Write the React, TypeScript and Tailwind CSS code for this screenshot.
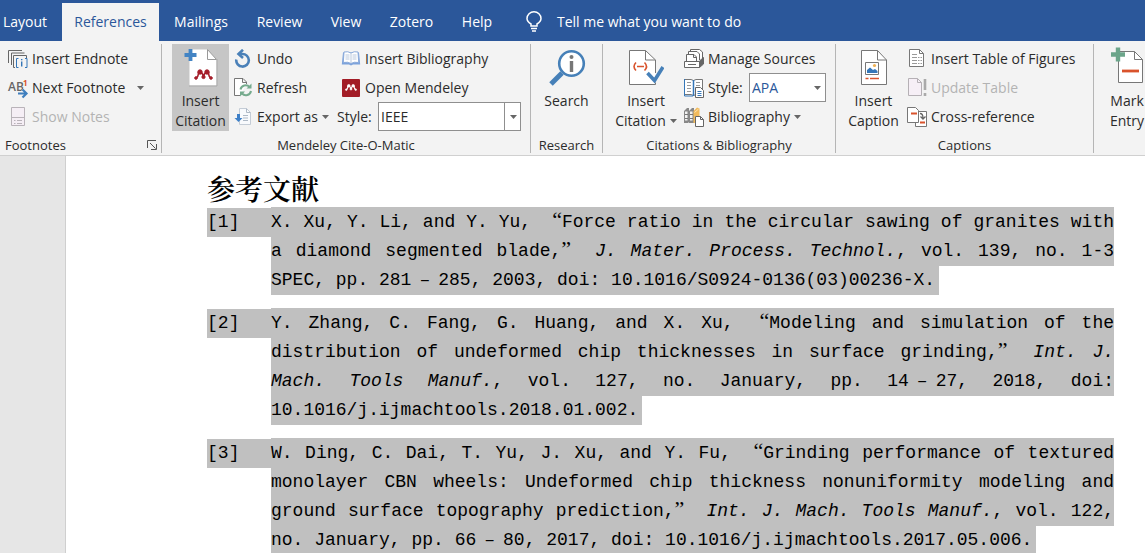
import React from "react";

type RowProps = {
  icon: React.ReactNode;
  label: string;
  disabled?: boolean;
  arrow?: boolean;
  arrowClass?: string;
};

const Caret: React.FC<{ className?: string }> = ({ className = "" }) => (
  <svg width="7" height="4" viewBox="0 0 7 4" className={className}>
    <path d="M0 0h7L3.5 4z" fill="#666" />
  </svg>
);

const Row: React.FC<RowProps> = ({
  icon,
  label,
  disabled,
  arrow,
  arrowClass = "ml-1",
}) => (
  <button
    disabled={disabled}
    className="flex h-[29px] items-center gap-1 whitespace-nowrap text-left disabled:text-[#b3b3b3]"
  >
    <span className="flex w-5 justify-center">{icon}</span>
    <span>{label}</span>
    {arrow && <Caret className={arrowClass} />}
  </button>
);

const Group: React.FC<{
  title: string;
  className: string;
  launcher?: boolean;
  children: React.ReactNode;
}> = ({ title, className, launcher, children }) => (
  <section
    className={`flex shrink-0 flex-col border-r border-[#b5b5b5] ${className}`}
  >
    <div className="flex h-[93px]">{children}</div>
    <div className="flex h-4 items-center justify-center text-[13px] leading-4">
      {title}
      {launcher && (
        <button aria-label={`${title} options`} className="ml-auto mr-1">
          <svg width="10" height="10" viewBox="0 0 10 10" fill="none" stroke="#555">
            <path d="M.5 8V.5H9M3 3l5.500 5.500M9.500 4v5.500H4" />
          </svg>
        </button>
      )}
    </div>
  </section>
);

/* Icons */

const EndnoteIcon = () => (
  <svg width="20" height="20" viewBox="0 0 20 20" fill="none" stroke="#666">
    <path d="M.5 14V1.500H14M3.500 16V4H16.500M7 18.500H5.500V6.500H18.500V9" />
    <path d="M10.500 9.500h-2v9h2M17 9.500h2v9h-2" stroke="#3476b8" />
    <path d="M13.700 12.500v5M13.700 10v1.300" stroke="#3476b8" strokeWidth="1.400" />
  </svg>
);

const NextFootnoteIcon = () => (
  <svg width="20" height="20" viewBox="0 0 20 20" className="overflow-visible">
    <text x="0" y="13" fontSize="12" fontWeight="600" fill="#666">AB</text>
    <text x="15" y="8" fontSize="8" fontWeight="700" fill="#d9532c">1</text>
    <path d="M10 15.500h8M14.500 11.500l4 4-4 4" stroke="#f3f3f3" strokeWidth="4" fill="none" />
    <path d="M10 15.500h8M14.500 11.500l4 4-4 4" stroke="#3f7fbe" strokeWidth="2.200" fill="none" />
  </svg>
);

const ShowNotesIcon = () => (
  <svg width="16" height="19" viewBox="0 0 16 19" fill="#f5eef5" stroke="#b9b3b9">
    <path d="M1.500.5h13v18h-13zM1.500 10.500h13" />
    <path d="M4 13.500h1.500M7 13.500h5M4 16.500h1.500M7 16.500h5" />
  </svg>
);

const MendeleyMark = ({ fill }: { fill: string }) => (
  <g fill={fill} stroke={fill}>
    <circle cx="6" cy="3" r="2.200" />
    <circle cx="13" cy="3" r="2.200" />
    <circle cx="2" cy="9" r="1.300" />
    <circle cx="9.500" cy="8" r="1.600" />
    <circle cx="17" cy="9" r="1.300" />
    <path d="M2 9q2.500-1 2.500-6M6 3q3 1 3.500 5 .5-4 3.500-5M14.500 3q0 5 2.500 6" fill="none" strokeWidth="1.600" />
  </g>
);

const MendeleyCitationIcon = () => (
  <svg width="36" height="40" viewBox="0 0 36 40">
    <path d="M6.500 1.500h18l9 10v26h-27z" fill="#fff" />
    <path d="M24.500 1.500v10h9z" fill="#fff" stroke="#999" />
    <path d="M6 38h28V11" fill="none" stroke="#aaa" />
    <path d="M7.500 1v12M1.500 7h12" stroke="#4384c4" strokeWidth="3.800" />
    <g transform="translate(11 21)">
      <MendeleyMark fill="#a51e2a" />
    </g>
  </svg>
);

const UndoIcon = () => (
  <svg width="18" height="19" viewBox="0 0 18 19" fill="none" stroke="#4a80b8" strokeWidth="2.600">
    <path d="M2.300 10.500A6.300 6.300 0 1 0 8 5H5" />
    <path d="M9 .8L4.500 5 9 9" />
  </svg>
);

const RefreshIcon = () => (
  <svg width="20" height="19" viewBox="0 0 20 19" fill="none">
    <path d="M7 17.500H1.500V.5H10l3.500 3.500v2M9.500.5v4h4" fill="#fff" stroke="#777" />
    <path d="M7.500 11.500a5.200 5.200 0 0 1 9-2.500M18 13a5.200 5.200 0 0 1-9 2.500" stroke="#75aa8d" strokeWidth="2" />
    <path d="M18.500 5.500v5h-5zM7 18.500v-5h5z" fill="#75aa8d" />
  </svg>
);

const ExportIcon = () => (
  <svg width="18" height="18" viewBox="0 0 18 18">
    <path d="M5.500.5h7l4 4v12h-11z" fill="#f8fafd" stroke="#c4ccd6" />
    <path d="M12.500.5v4h4M9 7.500h5M9 10h5M9 12.500h5" fill="none" stroke="#aeb9c6" />
    <path d="M3 6h3v4h2.500l-4 4-4-4H3z" fill="#3d7fc7" />
  </svg>
);

const BookIcon = () => (
  <svg width="20" height="15" viewBox="0 0 20 15">
    <path d="M2 1.500L.8 13.500H8l2 1 2-1h7.200L18 1.500z" fill="#7da3dc" />
    <path d="M3 1q4-1 7 1 3-2 7-1l.7 10.500Q13 10.500 10 12.500 7 10.500 2.300 11.500z" fill="#fff" stroke="#8aaada" />
    <path d="M10 2v10M4.500 4h4M4.500 6h4M4.500 8h4M11.500 4h4M11.500 6h4M11.500 8h4" stroke="#b9c8dd" />
  </svg>
);

const MendeleyIcon = () => (
  <svg width="18" height="18" viewBox="0 0 18 18">
    <rect width="18" height="18" rx="1" fill="#a21c26" />
    <g transform="translate(3 5) scale(.63)">
      <MendeleyMark fill="#fff" />
    </g>
  </svg>
);

const SearchIcon = () => (
  <svg width="38" height="38" viewBox="0 0 38 38">
    <path d="M14 24L3 35" stroke="#4680b8" strokeWidth="5" />
    <circle cx="23.500" cy="14.500" r="12.300" fill="#fff" stroke="#4680b8" strokeWidth="2.600" />
    <circle cx="23.500" cy="8" r="2" fill="#777" />
    <path d="M23.500 12v11" stroke="#777" strokeWidth="3.400" />
  </svg>
);

const CitationIcon = () => (
  <svg width="36" height="38" viewBox="0 0 36 38" fill="none">
    <path d="M27.500 24V11l-10-9.500h-16v34h26v-2" fill="#fff" stroke="#777" />
    <path d="M17.500 1.500v9.500h10" stroke="#777" />
    <path d="M8 13.500q-4 4 0 8M16.500 13.500q4 4 0 8M9 17.500h7" stroke="#d9532c" strokeWidth="1.600" />
    <path d="M19.500 24l7 7.500L35 18" stroke="#4680b8" strokeWidth="3.600" />
  </svg>
);

const ManageSourcesIcon = () => (
  <svg width="20" height="20" viewBox="0 0 20 20" fill="#fff" stroke="#666">
    <path d="M6.500 9V.5h9L18.500 3v7" />
    <path d="M4.500 11V2.500H13L15.500 5v6" />
    <path d="M2.500 13V5.500H10l2.500 2.500v5" />
    <path d="M9.500 5.500v3h3" fill="none" />
    <path d="M15.500 12l4-3.500V15l-4 3.500z" fill="#666" />
    <path d="M.5 12.500h15v6H.5z" />
    <path d="M4 15.500h8" />
  </svg>
);

const StyleIcon = () => (
  <svg width="20" height="20" viewBox="0 0 20 20" fill="none">
    <path d="M.5 1.500H7l2.500 1 2.500-1h6.500v15H12l-2.500 1-2.500-1H.5z" fill="#fff" stroke="#777" />
    <path d="M9.500 2v16" stroke="#3476b8" strokeWidth="1.500" />
    <path d="M.5 1v17H9" stroke="#3476b8" />
    <path d="M3 4.500h4M3 7.500h4M3 10.500h4M3 13.500h4M12 4.500h4M12 7.500h4" stroke="#999" />
    <path d="M11.500 9.500h5l3 3v7h-8z" fill="#fff" stroke="#666" />
    <path d="M13.500 13.500h4M13.500 15.500h4M13.500 17.500h4" stroke="#3476b8" />
  </svg>
);

const BibliographyIcon = () => (
  <svg width="20" height="20" viewBox="0 0 20 20">
    <path d="M0 4l3-3h2v14l-1 1H0zM5 4l3-3h2v15H5z" fill="#888" />
    <path d="M1 4.500h2.500v9H1zM6 4.500h2.500v9H6z" fill="#f3f3f3" />
    <path d="M1 7.500h3M1 11.500h3M6 7.500h3M6 11.500h3" stroke="#777" />
    <path d="M9.500 4L13 .5l2.500 1V9H11v7H9.500z" fill="#f2bb5c" />
    <path d="M10.500 5.500l4-3.500" stroke="#fbe4b8" />
    <path d="M11.500 9.500h5l3 3v7h-8z" fill="#fff" stroke="#666" />
    <path d="M16.500 9.500v3h3" fill="none" stroke="#666" />
  </svg>
);

const CaptionIcon = () => (
  <svg width="28" height="38" viewBox="0 0 28 38" fill="none">
    <path d="M1.500 1.500h16l9 9.500v24.500h-25z" fill="#fff" stroke="#777" />
    <path d="M17.500 1.500v9.500h9" stroke="#777" />
    <path d="M5.500 13.500h13v12h-13z" stroke="#777" />
    <path d="M7 24v-3l3-2.500 3 2.500 2-1 2.500 2v2z" fill="#3476b8" />
    <circle cx="14.500" cy="16.500" r="1.600" fill="#efb052" />
    <path d="M5.500 29.500h3M10 29.500h9" stroke="#d9532c" strokeWidth="1.300" />
  </svg>
);

const TableFiguresIcon = () => (
  <svg width="16" height="19" viewBox="0 0 16 19" fill="none">
    <path d="M.5.5h10l4 4v13H.5z" fill="#fff" stroke="#777" />
    <path d="M10.500.5v4h4" stroke="#777" />
    <path d="M3 5.500h5M3 8.500h5M9 8.500h1.500M3 11.500h5M9 11.500h1.500M3 14.500h5M9 14.500h1.500M11.500 8.500H13M11.500 11.500H13M11.500 14.500H13" stroke="#999" />
  </svg>
);

const UpdateTableIcon = () => (
  <svg width="19" height="19" viewBox="0 0 19 19" fill="none">
    <path d="M.5.5h9l4 4v13H.5z" fill="#f6eff6" stroke="#b5b0b5" />
    <path d="M9.500.5v4h4" stroke="#b5b0b5" />
    <path d="M17 1v11M17 15v3" stroke="#aaa" strokeWidth="2.600" />
  </svg>
);

const CrossRefIcon = () => (
  <svg width="20" height="20" viewBox="0 0 20 20" fill="none">
    <path d="M10.500 4.500h9v15h-11V15" fill="#fff" stroke="#777" />
    <path d="M.5.500h8l3 3v12H.5z" fill="#fff" stroke="#777" />
    <path d="M4 6.500h6M13 15.500h5" stroke="#d9532c" strokeWidth="2" />
    <path d="M13 6.500q3 0 3 4.500M13.500 9.500L16 12l2.500-2.500" stroke="#666" strokeWidth="1.300" />
  </svg>
);

const MarkEntryIcon = () => (
  <svg width="34" height="38" viewBox="0 0 34 38" fill="none">
    <path d="M8.500 4.500h16l8 8v23h-24z" fill="#fff" stroke="#777" />
    <path d="M24.500 4.500v8h8" stroke="#777" />
    <path d="M8 .5v14M1 7.500h14" stroke="#6ba58a" strokeWidth="4.400" />
    <path d="M12 24h17" stroke="#d9532c" strokeWidth="2.800" />
  </svg>
);

const BulbIcon = () => (
  <svg width="16" height="21" viewBox="0 0 16 21" fill="none" stroke="#fff" strokeWidth="1.500">
    <path d="M5 15v-2Q1 10.500 1 7.500a7 6.700 0 0 1 14 0q0 3-4 5.500v2zM5 17.500h6M6 20h4" />
  </svg>
);

const tabs = [
  { name: "Layout", className: "w-[62px] pr-3" },
  { name: "References", className: "w-[97px] bg-[#f3f3f3] text-[#2b579a]" },
  { name: "Mailings", className: "w-[84px]" },
  { name: "Review", className: "w-[73px]" },
  { name: "View", className: "w-[60px]" },
  { name: "Zotero", className: "w-[71px]" },
  { name: "Help", className: "w-[60px]" },
];

/* Full-width punctuation used between Latin text */
const OpenQuote = () => (
  <span className="pl-[10px] font-['Liberation_Serif',serif] text-[22px] leading-none">
    “
  </span>
);

const CloseQuote = () => (
  <span className="pr-[10px] font-['Liberation_Serif',serif] text-[22px] leading-none">
    ”
  </span>
);

const Dash = () => <span className="px-2">–</span>;

const references = [
  {
    id: 1,
    body: (
      <>
        X. Xu, Y. Li, and Y. Yu, <OpenQuote />
        Force ratio in the circular sawing of granites with a diamond segmented
        blade,
        <CloseQuote /> <em>J. Mater. Process. Technol.</em>, vol. 139, no. 1-3
        SPEC, pp. 281
        <Dash />
        285, 2003, doi:{" "}
        <span className="whitespace-nowrap">10.1016/S0924-0136(03)00236-X.</span>
      </>
    ),
  },
  {
    id: 2,
    body: (
      <>
        Y. Zhang, C. Fang, G. Huang, and X. Xu, <OpenQuote />
        Modeling and simulation of the distribution of undeformed chip
        thicknesses in surface grinding,
        <CloseQuote /> <em>Int. J. Mach. Tools Manuf.</em>, vol. 127, no.
        January, pp. 14
        <Dash />
        27, 2018, doi:{" "}
        <span className="whitespace-nowrap">
          10.1016/j.ijmachtools.2018.01.002.
        </span>
      </>
    ),
  },
  {
    id: 3,
    body: (
      <>
        W. Ding, C. Dai, T. Yu, J. Xu, and Y. Fu, <OpenQuote />
        Grinding performance of textured monolayer CBN wheels: Undeformed chip
        thickness nonuniformity modeling and ground surface topography
        prediction,
        <CloseQuote /> <em>Int. J. Mach. Tools Manuf.</em>, vol. 122, no.
        January, pp. 66
        <Dash />
        80, 2017, doi:{" "}
        <span className="whitespace-nowrap">
          10.1016/j.ijmachtools.2017.05.006.
        </span>
      </>
    ),
  },
];

const App: React.FC = () => {
  return (
    <div className="flex h-screen flex-col overflow-hidden bg-white font-['Open_Sans','Noto_Sans',sans-serif] text-[14px] text-[#2b2b2b]">
      {/* Tab bar */}
      <nav className="flex h-[41px] shrink-0 items-end bg-[#2b579a] text-white">
        {tabs.map((tab) => (
          <button
            key={tab.name}
            className={`h-[38px] shrink-0 whitespace-nowrap pb-[2px] text-center ${tab.className}`}
          >
            {tab.name}
          </button>
        ))}
        <button className="ml-[19px] flex h-[38px] items-center gap-[15px] whitespace-nowrap pb-[2px]">
          <BulbIcon />
          Tell me what you want to do
        </button>
      </nav>

      {/* Ribbon */}
      <div className="flex h-[115px] shrink-0 overflow-hidden border-b border-[#d0d0d0] bg-[#f3f3f3] pb-[2px] pt-[3px] leading-5">
        <Group title="Footnotes" launcher className="w-[162px] pl-[5px]">
          <div className="pl-[3px]">
            <Row icon={<EndnoteIcon />} label="Insert Endnote" />
            <Row icon={<NextFootnoteIcon />} label="Next Footnote" arrow arrowClass="ml-2" />
            <Row icon={<ShowNotesIcon />} label="Show Notes" disabled />
          </div>
        </Group>

        <Group title="Mendeley Cite-O-Matic" className="w-[369px]">
          <button className="ml-[10px] flex h-[87px] w-[57px] shrink-0 flex-col items-center bg-[#c6c6c6] pt-1">
            <MendeleyCitationIcon />
            <span className="mt-[3px]">Insert Citation</span>
          </button>
          <div className="ml-1 w-[104px] shrink-0">
            <Row icon={<UndoIcon />} label="Undo" />
            <Row icon={<RefreshIcon />} label="Refresh" />
            <Row icon={<ExportIcon />} label="Export as" arrow arrowClass="" />
          </div>
          <div className="shrink-0">
            <div className="pl-1">
              <Row icon={<BookIcon />} label="Insert Bibliography" />
              <Row icon={<MendeleyIcon />} label="Open Mendeley" />
            </div>
            <div className="flex items-center">
              <label htmlFor="mendeley-style" className="w-[41px]">
                Style:
              </label>
              <div className="relative">
                <select
                  id="mendeley-style"
                  className="h-[29px] w-[143px] appearance-none border border-[#8f8f8f] bg-white pl-[2px]"
                >
                  <option>IEEE</option>
                </select>
                <span className="pointer-events-none absolute inset-y-0 right-0 flex w-[17px] items-center justify-center border-l border-[#8f8f8f]">
                  <Caret />
                </span>
              </div>
            </div>
          </div>
        </Group>

        <Group title="Research" className="w-[72px]">
          <button className="flex w-full flex-col items-center self-start pt-[5px]">
            <SearchIcon />
            <span className="mt-1">Search</span>
          </button>
        </Group>

        <Group title="Citations & Bibliography" className="w-[233px]">
          <button className="flex w-[86px] shrink-0 flex-col items-center self-start pt-[5px]">
            <CitationIcon />
            <span className="mt-1">Insert</span>
            <span className="flex items-center gap-1">
              Citation <Caret />
            </span>
          </button>
          <div className="-ml-[5px] shrink-0">
            <Row icon={<ManageSourcesIcon />} label="Manage Sources" />
            <div className="flex h-[29px] items-center gap-1">
              <StyleIcon />
              <label htmlFor="citation-style" className="w-[37px]">
                Style:
              </label>
              <div className="relative">
                <select
                  id="citation-style"
                  className="h-[29px] w-[77px] appearance-none border border-[#8f8f8f] bg-white pl-[2px] text-[#2b579a]"
                >
                  <option>APA</option>
                </select>
                <Caret className="pointer-events-none absolute right-[5px] top-[13px]" />
              </div>
            </div>
            <Row icon={<BibliographyIcon />} label="Bibliography" arrow arrowClass="" />
          </div>
        </Group>

        <Group title="Captions" className="w-[258px]">
          <button className="flex w-[71px] shrink-0 flex-col items-center self-start pl-1 pt-[5px]">
            <CaptionIcon />
            <span className="mt-1">
              Insert
              <br />
              Caption
            </span>
          </button>
          <div className="shrink-0">
            <Row icon={<TableFiguresIcon />} label="Insert Table of Figures" />
            <Row icon={<UpdateTableIcon />} label="Update Table" disabled />
            <Row icon={<CrossRefIcon />} label="Cross-reference" />
          </div>
        </Group>

        <button className="ml-4 flex shrink-0 flex-col items-center self-start pt-[3px]">
          <MarkEntryIcon />
          <span className="mt-[6px]">
            Mark
            <br />
            Entry
          </span>
        </button>
      </div>

      {/* Document */}
      <main className="flex min-h-0 flex-1 bg-[#e6e6e6] pl-[65px]">
        <article className="flex-1 border-l border-[#cfcfcf] bg-white pl-[141px] pr-[31px] pt-[15px] text-black">
          <h1 className="h-[37px] font-['Noto_Serif_CJK_SC','Noto_Sans_CJK_SC',serif] text-[28px] font-semibold leading-[34px]">
            参考文献
          </h1>
          <div className="flex flex-col gap-[14px] font-['Liberation_Mono','Noto_Sans_CJK_SC',monospace] text-[18px] leading-[29px]">
            {references.map((ref) => (
              <div key={ref.id} className="flex">
                <span className="h-[29px] w-16 shrink-0 bg-[#c0c0c0]">
                  [{ref.id}]
                </span>
                <p className="flex-1 text-justify">
                  <span className="bg-[#c0c0c0] py-[5px] pr-1">{ref.body}</span>
                </p>
              </div>
            ))}
          </div>
        </article>
      </main>
    </div>
  );
};

export default App;
